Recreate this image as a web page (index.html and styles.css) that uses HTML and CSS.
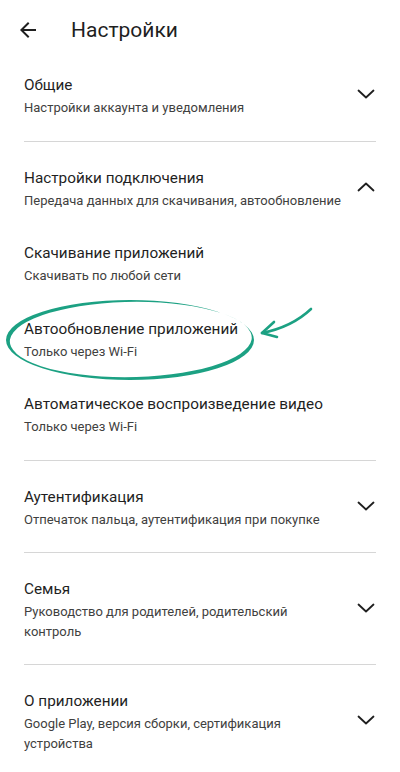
FILE: index.html
```html
<!DOCTYPE html>
<html lang="ru">
<head>
  <meta charset="UTF-8">
  <title>Настройки</title>
  <meta name="viewport" content="width=device-width, initial-scale=1.0">
  <link rel="stylesheet" href="styles.css">
</head>
<body>
  <div class="screen">
    <header class="topbar">
      <svg class="back" viewBox="0 0 24 24" width="24" height="24">
        <path d="M20 11H7.83l5.59-5.59L12 4l-8 8 8 8 1.41-1.41L7.83 13H20v-2z"/>
      </svg>
      <h1>Настройки</h1>
    </header>

    <section class="group">
      <div class="row">
        <div class="text">
          <div class="title">Общие</div>
          <div class="sub">Настройки аккаунта и уведомления</div>
        </div>
        <svg class="chevron" viewBox="0 0 20 12"><polyline points="2.5,2.5 10,9.5 17.5,2.5"/></svg>
      </div>
    </section>

    <section class="group">
      <div class="row">
        <div class="text">
          <div class="title">Настройки подключения</div>
          <div class="sub">Передача данных для скачивания, автообновление</div>
        </div>
        <svg class="chevron" viewBox="0 0 20 12"><polyline points="2.5,9.5 10,2.5 17.5,9.5"/></svg>
      </div>
      <div class="item">
        <div class="title">Скачивание приложений</div>
        <div class="sub">Скачивать по любой сети</div>
      </div>
      <div class="item">
        <div class="title">Автообновление приложений</div>
        <div class="sub">Только через Wi-Fi</div>
      </div>
      <div class="item">
        <div class="title">Автоматическое воспроизведение видео</div>
        <div class="sub">Только через Wi-Fi</div>
      </div>
    </section>

    <section class="group">
      <div class="row">
        <div class="text">
          <div class="title">Аутентификация</div>
          <div class="sub">Отпечаток пальца, аутентификация при покупке</div>
        </div>
        <svg class="chevron" viewBox="0 0 20 12"><polyline points="2.5,2.5 10,9.5 17.5,2.5"/></svg>
      </div>
    </section>

    <section class="group">
      <div class="row">
        <div class="text">
          <div class="title">Семья</div>
          <div class="sub">Руководство для родителей, родительский контроль</div>
        </div>
        <svg class="chevron" viewBox="0 0 20 12"><polyline points="2.5,2.5 10,9.5 17.5,2.5"/></svg>
      </div>
    </section>

    <section class="group last">
      <div class="row">
        <div class="text">
          <div class="title">О приложении</div>
          <div class="sub">Google Play, версия сборки, сертификация устройства</div>
        </div>
        <svg class="chevron" viewBox="0 0 20 12"><polyline points="2.5,2.5 10,9.5 17.5,2.5"/></svg>
      </div>
    </section>

    <!-- hand-drawn highlight over "Автообновление приложений" -->
    <svg class="mark" viewBox="0 0 400 772" width="400" height="772">
      <path class="ring" fill-rule="evenodd"
        d="M6 340 A124 40 0 1 0 254 340 A124 40 0 1 0 6 340 Z
           M10 339.5 A120.8 37.6 -1 1 0 251.6 339.5 A120.8 37.6 -1 1 0 10 339.5 Z"/>
      <path class="arrow" d="M311 309 Q292 327 262 333"/>
      <path class="arrow" d="M274 322 L262 333 L277 337"/>
    </svg>
  </div>
</body>
</html>
```

FILE: styles.css
```css
body {
  margin: 0;
  background: #ffffff;
  color: #1f1f1f;
  font-family: Roboto, "Noto Sans", sans-serif;
}

.screen {
  position: relative;
  width: 400px;
  min-height: 772px;
  overflow: hidden;
}

.topbar {
  display: flex;
  align-items: center;
  padding: 16px 24px 5px 16px;
}

.back {
  fill: #1f1f1f;
  margin-right: 31px;
  flex: none;
}

h1 {
  margin: 0;
  font-size: 21px;
  line-height: 28px;
  font-weight: 400;
  color: #1f1f1f;
}

.group {
  margin: 0 24px;
  padding: 25px 0 23px;
  border-bottom: 1px solid #d6d6d6;
}

.group.last {
  border-bottom: none;
}

.row {
  display: flex;
  align-items: center;
  gap: 12px;
}

.text {
  flex: 1;
}

.title {
  font-size: 15.3px;
  line-height: 22px;
  color: #1f1f1f;
}

.sub {
  margin-top: 2px;
  font-size: 13px;
  line-height: 19.5px;
  color: #3f4140;
}

.item {
  margin-top: 32px;
}

.chevron {
  width: 20px;
  height: 12px;
  flex: none;
  margin-top: -3px;
}

.chevron polyline {
  fill: none;
  stroke: #1f1f1f;
  stroke-width: 1.8;
  stroke-linecap: round;
  stroke-linejoin: round;
}

.mark {
  position: absolute;
  left: 0;
  top: 0;
  pointer-events: none;
}

.ring {
  fill: #1ca183;
}

.arrow {
  fill: none;
  stroke: #1ca183;
  stroke-width: 2.6;
  stroke-linecap: round;
  stroke-linejoin: round;
}
```
